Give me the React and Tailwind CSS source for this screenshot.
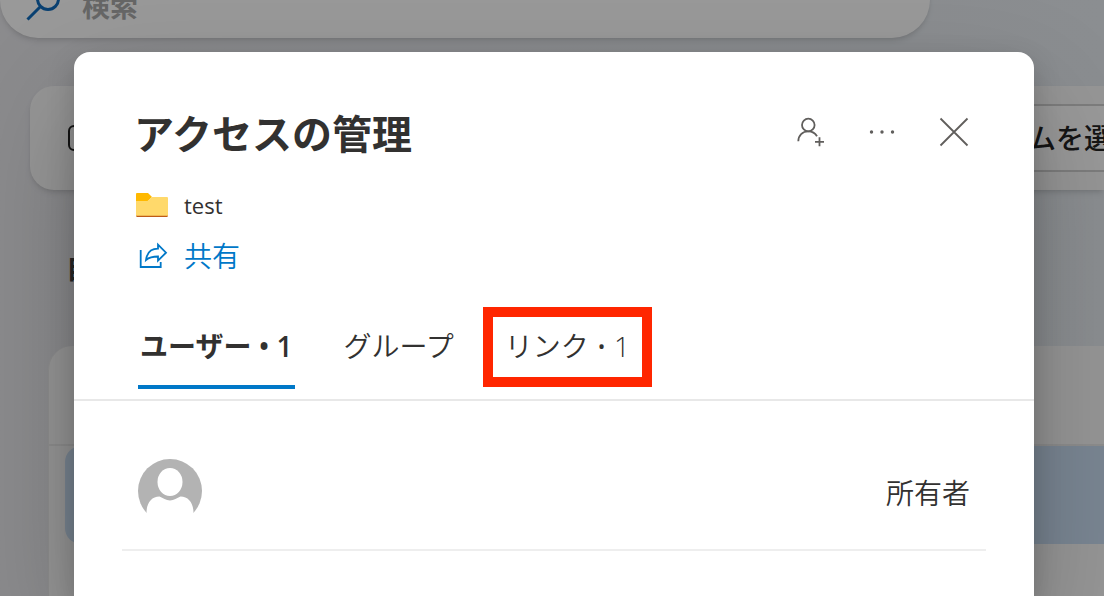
import React, { useState } from "react";

const FolderIcon = () => (
  <svg width="32" height="24" viewBox="0 0 32 24" aria-hidden="true">
    <path d="M0 1.200C0 .5.5 0 1.200 0H12l4 4-4 4H0z" fill="#ffb900" />
    <path
      d="M0 8h10.500c1 0 1.600-.3 2.300-1L16 4h14.800c.7 0 1.200.5 1.200 1.200V23H0z"
      fill="#ffd96b"
    />
    <path d="M0 22.800h32c0 .7-.5 1.200-1.200 1.200H1.200C.5 24 0 23.500 0 22.800z" fill="#bf5b16" />
  </svg>
);

const ShareIcon = () => (
  <svg
    width="30"
    height="28"
    viewBox="0 0 30 28"
    fill="none"
    stroke="currentColor"
    strokeWidth="1.8"
    aria-hidden="true"
  >
    <path d="M2.700 8v17h20v-5" />
    <path d="M20 2.700l8 8-8 8v-4.200c-5 0-9 1-12 3.500 1-7.500 5-11.300 12-11.300z" />
  </svg>
);

const AddPersonIcon = () => (
  <svg
    width="30"
    height="30"
    viewBox="-1 0 30 30"
    fill="none"
    stroke="currentColor"
    strokeWidth="1.8"
    aria-hidden="true"
  >
    <circle cx="12.300" cy="8" r="6.300" />
    <path d="M2.300 24.300c0-6 4.200-10 10-10 3.800 0 7 1.900 8.700 5" />
    <path d="M23.500 20.300v9M19 24.800h9" />
  </svg>
);

const MoreIcon = () => (
  <svg width="30" height="30" viewBox="0 0 30 30" fill="currentColor" aria-hidden="true">
    <circle cx="4.500" cy="15" r="1.700" />
    <circle cx="15" cy="15" r="1.700" />
    <circle cx="25.500" cy="15" r="1.700" />
  </svg>
);

const CloseIcon = () => (
  <svg
    width="30"
    height="30"
    viewBox="0 0 30 30"
    fill="none"
    stroke="currentColor"
    strokeWidth="1.800"
    aria-hidden="true"
  >
    <path d="M1.500 1.500l27 27M28.500 1.500l-27 27" />
  </svg>
);

const Avatar = () => (
  <svg width="64" height="64" viewBox="0 0 64 64" role="img" aria-label="ユーザー">
    <circle cx="32" cy="32" r="32" fill="#b3b3b3" />
    <ellipse cx="32" cy="23" rx="12.500" ry="14" fill="#fff" />
    <path
      d="M0 54h8.500c0-10 5-16.500 13-16.500 3.500 1.500 6.500 4 10.500 4s7-2.500 10.500-4c8 0 13 6.500 13 16.500h8.500v10H0z"
      fill="#fff"
    />
  </svg>
);

const SearchIcon = () => (
  <svg
    width="36"
    height="36"
    viewBox="0 0 36 36"
    fill="none"
    stroke="currentColor"
    strokeWidth="3"
    aria-hidden="true"
  >
    <circle cx="22" cy="13" r="10.500" />
    <path d="M14.500 20.500L1.500 33.500" />
  </svg>
);

const tabs = [
  { id: "users", label: "ユーザー • 1" },
  { id: "groups", label: "グループ" },
  { id: "links", label: "リンク • 1", marked: true },
];

// File list that sits behind the dialog
const FilesPage = () => (
  <div className="min-h-screen overflow-hidden bg-linear-to-r from-[#e8e8ec] to-[#e8edf2]">
    <label className="-mt-[38px] mr-[174px] flex h-[76px] items-center rounded-full bg-white pl-[26px] pt-2 shadow-md">
      <span className="text-[#0f6cbd]">
        <SearchIcon />
      </span>
      <input
        type="search"
        placeholder="検索"
        aria-label="検索"
        className="ml-5 min-w-0 flex-1 bg-transparent pt-1 text-[28px] leading-10 font-bold outline-none placeholder:text-[#aaaaaa]"
      />
    </label>

    <div className="mt-12 ml-[30px] flex h-[104px] items-center justify-between rounded-l-3xl bg-[#fafafa] pl-[38px] shadow-md">
      <span className="h-[26px] w-8 rounded-md border-2 border-[#242424]"></span>
      <button
        type="button"
        className="-mr-9 h-[68px] border-y-2 border-[#d1d1d1] bg-white pl-16 text-[28px] font-medium whitespace-nowrap text-[#242424]"
      >
        アイテムを選択
      </button>
    </div>

    <h2 className="mt-[58px] ml-[66px] text-[28px] leading-10 font-bold text-[#424242]">自分</h2>

    <div className="mt-[58px] ml-12 min-h-[250px] rounded-tl-3xl border-l border-[#ececec] bg-[#fafafa]">
      <div className="h-[100px] border-b-2 border-[#ececec]"></div>
      <div className="ml-4 h-[98px] rounded-l-2xl bg-[#cbdff5]"></div>
    </div>
  </div>
);

const AccessDialog = () => {
  const [activeTab, setActiveTab] = useState("users");

  return (
    <div
      role="dialog"
      aria-modal="true"
      aria-labelledby="access-title"
      className="mt-[52px] mr-[70px] ml-[74px] flex-1 rounded-t-2xl bg-white text-[#323130] shadow-[0_50px_115px_rgba(0,0,0,0.22),0_10px_28px_rgba(0,0,0,0.18)]"
    >
      <div className="flex items-center justify-between pt-12 pr-12 pl-[60px]">
        <h1 id="access-title" className="pt-1 text-[40px] leading-[60px] font-bold">
          アクセスの管理
        </h1>
        <div className="flex gap-2 text-[#605e5c]">
          <button type="button" aria-label="アクセス許可の付与" className="flex size-16 items-center justify-center">
            <AddPersonIcon />
          </button>
          <button type="button" aria-label="その他" className="flex size-16 items-center justify-center">
            <MoreIcon />
          </button>
          <button type="button" aria-label="閉じる" className="flex size-16 items-center justify-center">
            <CloseIcon />
          </button>
        </div>
      </div>

      <div className="mt-[15px] pl-[62px]">
        <div className="flex h-13 items-center gap-4 text-[22px]">
          <FolderIcon />
          <span>test</span>
        </div>
        <a href="#share" className="flex h-[50px] w-fit items-center gap-4 pl-0.5 text-[28px] leading-10 font-[350] text-[#0078c8]">
          <ShareIcon />
          共有
        </a>
      </div>

      <div role="tablist" className="mt-7 flex gap-[47px] border-b-2 border-[#e8e8e8] pb-[10px] pl-16">
        {tabs.map((tab) => (
          <button
            key={tab.id}
            type="button"
            role="tab"
            aria-selected={activeTab === tab.id}
            onClick={() => setActiveTab(tab.id)}
            className={`relative h-20 border-b-4 px-0.5 pb-0.5 text-[28px] ${
              activeTab === tab.id
                ? "border-[#0078c8] font-semibold"
                : "border-transparent font-[350]"
            }`}
          >
            {tab.label}
            {tab.marked && (
              <span className="pointer-events-none absolute -inset-x-5 -inset-y-0.5 border-[10px] border-[#ff2600]"></span>
            )}
          </button>
        ))}
      </div>

      <ul className="px-12 pt-8">
        <li className="flex h-[118px] items-center justify-between border-b-2 border-[#eeeeee] px-4">
          <Avatar />
          <span className="pt-1 text-[28px] font-[350]">所有者</span>
        </li>
      </ul>
    </div>
  );
};

const App = () => (
  <div className="relative h-screen overflow-hidden font-['Open_Sans','Noto_Sans_CJK_JP',sans-serif]">
    <FilesPage />
    {/* Overlay */}
    <div className="absolute inset-0 flex bg-black/40">
      <AccessDialog />
    </div>
  </div>
);

export default App;
